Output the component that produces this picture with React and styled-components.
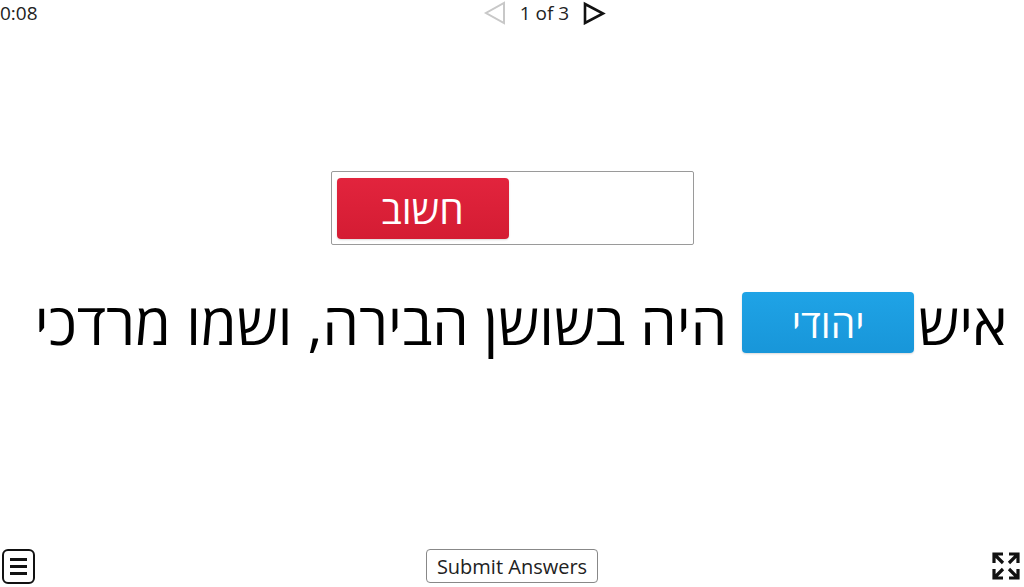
import React from "react";
import styled, { createGlobalStyle } from "styled-components";

const GlobalStyle = createGlobalStyle`
  html, body {
    margin: 0;
    padding: 0;
    background: #ffffff;
    font-family: "Open Sans", "Noto Sans", sans-serif;
    color: #111111;
  }
`;

const Page = styled.div`
  width: 1024px;
  height: 587px;
  display: flex;
  flex-direction: column;
  overflow: hidden;
`;

const TopBar = styled.div`
  height: 26px;
  display: grid;
  grid-template-columns: 1fr auto 1fr;
  align-items: center;
`;

const Timer = styled.div`
  font-size: 19px;
  color: #222;
  line-height: 26px;
`;

const Pager = styled.div`
  display: flex;
  align-items: center;
  gap: 13px;
  font-size: 19px;
  color: #222;
  padding-left: 65px;
`;

const Stage = styled.div`
  flex: 1;
  display: flex;
  flex-direction: column;
  align-items: center;
  padding-top: 145px;
`;

const DropBox = styled.div`
  width: 351px;
  height: 72px;
  border: 1px solid #9a9a9a;
  border-radius: 2px;
  display: flex;
  align-items: center;
  padding: 0 5px;
  box-sizing: content-box;
`;

const Chip = styled.div`
  width: 172px;
  height: 61px;
  flex-shrink: 0;
  border-radius: 4px;
  display: flex;
  align-items: center;
  justify-content: center;
  color: #fff;
  font-size: 39px;
  line-height: 1;
  direction: rtl;
  background: ${(p) =>
    p.$tone === "red"
      ? "linear-gradient(#e2243d, #d41c33)"
      : "linear-gradient(#1fa3e6, #1896d9)"};
  box-shadow: 0 1px 2px rgba(0, 0, 0, 0.15);
`;

const Sentence = styled.div`
  margin-top: 47px;
  width: 100%;
  height: 61px;
  display: flex;
  direction: rtl;
  justify-content: center;
  align-items: center;
  font-size: 58px;
  line-height: 61px;
  color: #000;
  padding-left: 18px;
  box-sizing: border-box;
`;

const Word = styled.span`
  white-space: pre;
  margin-left: ${(p) => (p.$tight ? "4px" : "0")};
`;

const BottomBar = styled.div`
  height: 38px;
  display: grid;
  grid-template-columns: 1fr auto 1fr;
  align-items: center;
  padding-bottom: 2px;
`;

const IconButton = styled.div`
  display: flex;
  justify-self: ${(p) => (p.$end ? "end" : "start")};
  padding: ${(p) => (p.$end ? "0 2px 0 0" : "0 0 0 2px")};
`;

const SubmitButton = styled.button`
  font-family: "Open Sans", sans-serif;
  font-size: 20px;
  color: #222;
  background: #fff;
  border: 1px solid #888;
  border-radius: 4px;
  height: 34px;
  padding: 0 10px;
`;

const PrevIcon = () => (
  <svg width="24" height="24" viewBox="0 0 24 24">
    <polygon points="21,2 21,22 3,12" fill="none" stroke="#c8c8c8" strokeWidth="2" />
  </svg>
);

const NextIcon = () => (
  <svg width="24" height="24" viewBox="0 0 24 24">
    <polygon points="3,3 3,22 21,12.5" fill="none" stroke="#111" strokeWidth="2.6" />
  </svg>
);

const MenuIcon = () => (
  <svg width="33" height="35" viewBox="0 0 33 35">
    <rect x="1" y="1" width="31" height="33" rx="5" fill="none" stroke="#111" strokeWidth="2" />
    <rect x="8" y="9" width="17" height="3" fill="#111" />
    <rect x="8" y="16" width="17" height="3" fill="#111" />
    <rect x="8" y="23" width="17" height="3" fill="#111" />
  </svg>
);

const FullscreenIcon = () => (
  <svg width="32" height="32" viewBox="0 0 32 32" fill="none" stroke="#111" strokeWidth="3.2">
    <path d="M4 13 V4 H13 M4 4 L13 13" />
    <path d="M28 13 V4 H19 M28 4 L19 13" />
    <path d="M4 19 V28 H13 M4 28 L13 19" />
    <path d="M28 19 V28 H19 M28 28 L19 19" />
  </svg>
);

export default function App() {
  return (
    <>
      <GlobalStyle />
      <Page>
        <TopBar>
          <Timer>0:08</Timer>
          <Pager>
            <PrevIcon />
            <span>1 of 3</span>
            <NextIcon />
          </Pager>
          <div />
        </TopBar>
        <Stage>
          <DropBox>
            <Chip $tone="red">חשוב</Chip>
          </DropBox>
          <Sentence>
            <Word $tight>איש</Word>
            <Chip $tone="blue">יהודי</Chip>
            <Word> היה בשושן הבירה, ושמו מרדכי</Word>
          </Sentence>
        </Stage>
        <BottomBar>
          <IconButton>
            <MenuIcon />
          </IconButton>
          <SubmitButton>Submit Answers</SubmitButton>
          <IconButton $end>
            <FullscreenIcon />
          </IconButton>
        </BottomBar>
      </Page>
    </>
  );
}
